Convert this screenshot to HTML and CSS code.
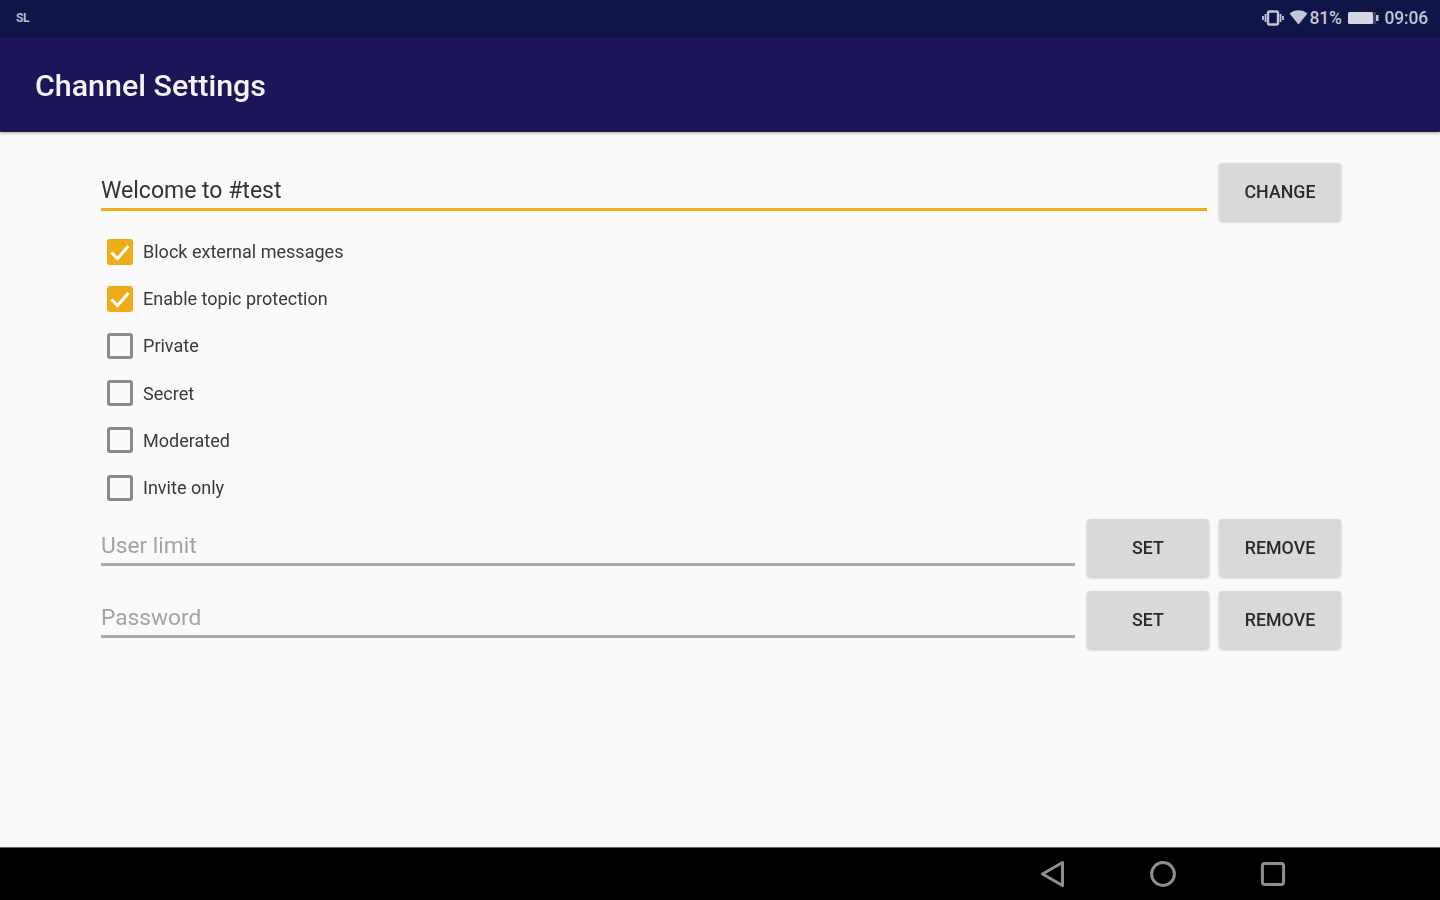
FILE: index.html
```html
<!DOCTYPE html>
<html lang="en">
<head>
<meta charset="utf-8">
<title>Channel Settings</title>
<link rel="stylesheet" href="styles.css">
</head>
<body>
<div class="screen">
  <header class="status">
    <span class="status-left">SL</span>
    <div class="status-right">
      <svg class="ic-vibrate" width="22" height="18" viewBox="0 0 22 18"><rect x="6" y="2.5" width="10" height="13" rx="1.5" fill="none" stroke="#c3c6d6" stroke-width="2.4"/><path d="M3.5 5v8M18.5 5v8M1 7v4M21 7v4" stroke="#c3c6d6" stroke-width="1.8"/></svg>
      <svg class="ic-wifi" width="19" height="16" viewBox="0 0 19 16"><path d="M0.5 4.5C5.5 0 13.5 0 18.5 4.5L9.5 15.5Z" fill="#c3c6d6"/></svg>
      <span class="status-text pct">81%</span>
      <svg class="ic-batt" width="31" height="14" viewBox="0 0 31 14"><rect x="0" y="1" width="25" height="12" rx="1.5" fill="#d5d7e2"/><rect x="25" y="1" width="3" height="12" fill="#3b3f68"/><rect x="28" y="4" width="2.5" height="6" fill="#c3c6d6"/></svg>
      <span class="status-text">09:06</span>
    </div>
  </header>
  <div class="appbar"><h1 class="title">Channel Settings</h1></div>
  <main class="content">
    <div class="row row-topic">
      <div class="field field-active"><span class="value">Welcome to #test</span></div>
      <button class="btn">CHANGE</button>
    </div>
    <ul class="checks">
      <li class="check"><span class="box on"><svg width="26" height="26" viewBox="0 0 26 26"><path d="M4.5 13.5l6 6L21.5 7" fill="none" stroke="#fff" stroke-width="3"/></svg></span>Block external messages</li>
      <li class="check"><span class="box on"><svg width="26" height="26" viewBox="0 0 26 26"><path d="M4.5 13.5l6 6L21.5 7" fill="none" stroke="#fff" stroke-width="3"/></svg></span>Enable topic protection</li>
      <li class="check"><span class="box"></span>Private</li>
      <li class="check"><span class="box"></span>Secret</li>
      <li class="check"><span class="box"></span>Moderated</li>
      <li class="check"><span class="box"></span>Invite only</li>
    </ul>
    <div class="row row-limit">
      <div class="field"><span class="hint">User limit</span></div>
      <div class="btns"><button class="btn">SET</button><button class="btn">REMOVE</button></div>
    </div>
    <div class="row row-pass">
      <div class="field"><span class="hint">Password</span></div>
      <div class="btns"><button class="btn">SET</button><button class="btn">REMOVE</button></div>
    </div>
  </main>
  <nav class="navbar">
    <svg width="26" height="28" viewBox="0 0 26 28"><path d="M22.5 2.5v23L2.5 14Z" fill="none" stroke="#8f8f8f" stroke-width="3" stroke-linejoin="round"/></svg>
    <svg width="26" height="26" viewBox="0 0 26 26"><circle cx="13" cy="13" r="11.4" fill="none" stroke="#8f8f8f" stroke-width="3"/></svg>
    <svg width="26" height="26" viewBox="0 0 26 26"><rect x="2.4" y="2.4" width="21.2" height="21.2" rx="2.5" fill="none" stroke="#8f8f8f" stroke-width="3"/></svg>
  </nav>
</div>
</body>
</html>
```
FILE: styles.css
```css
* { box-sizing: border-box; }
html, body { margin: 0; padding: 0; }
body { width: 1440px; height: 900px; overflow: hidden; background: #fafafa; font-family: Roboto, "Liberation Sans", sans-serif; }
.screen { width: 1440px; height: 900px; display: flex; flex-direction: column; filter: blur(0.7px); }
.status { height: 37px; flex: none; background: #0f1546; display: flex; align-items: center; justify-content: space-between; padding: 0 12px 1px 16px; }
.status-left { font-size: 12px; font-weight: 700; color: #b9bccd; letter-spacing: -0.5px; }
.status-right { display: flex; align-items: center; }
.status-text { font-size: 17.5px; font-weight: 500; color: #c3c6d6; letter-spacing: -0.2px; }
.pct { margin-right: 6px; }
.ic-wifi { margin-left: 5px; margin-right: 1px; margin-top: -3px; }
.ic-batt { margin-right: 6px; }
.appbar { height: 95px; flex: none; background: #1c1558; display: flex; align-items: center; padding: 2px 0 0 35px; box-shadow: 0 1px 3px rgba(0,0,0,.35); position: relative; }
.title { margin: 0; font-size: 30.4px; font-weight: 500; color: #f4f4f8; }
.content { flex: 1; padding: 31px 99px 0 101px; background: #fafafa; }
.row { display: flex; align-items: flex-start; }
.field { flex: 1; height: 47px; border-bottom: 3px solid #ababab; display: flex; align-items: center; padding-top: 9px; font-size: 23px; }
.field-active { height: 48px; border-bottom-color: #eeab1a; }
.value { color: #333; }
.hint { color: #a3a3a3; font-size: 22.7px; }
.btn { width: 122px; height: 58px; border: 0; border-radius: 4px; background: #d8d9d9; box-shadow: 0 1px 3px rgba(0,0,0,.22); color: #2a2a2a; font: 500 17.8px Roboto, "Liberation Sans", sans-serif; padding: 0 0 2px; }
.btns { display: flex; gap: 10px; margin-left: 12px; flex: none; }
.row-topic { gap: 12px; }
.checks { list-style: none; margin: 7px 0 0; padding: 0 0 0 6px; }
.check { height: 47.2px; display: flex; align-items: center; gap: 10px; font-size: 18.05px; color: #3a3a3a; }
.box { width: 26px; height: 26px; flex: none; border: 3px solid #8a8a8a; border-radius: 3px; }
.box.on { border: 0; background: #eeab1a; }
.box svg { display: block; }
.row-limit { margin-top: 8px; }
.row-pass { margin-top: 14px; }
.navbar { height: 53px; flex: none; background: #000; display: flex; align-items: center; padding-left: 1040px; gap: 84px; border-top: 1px solid #666; }
```
